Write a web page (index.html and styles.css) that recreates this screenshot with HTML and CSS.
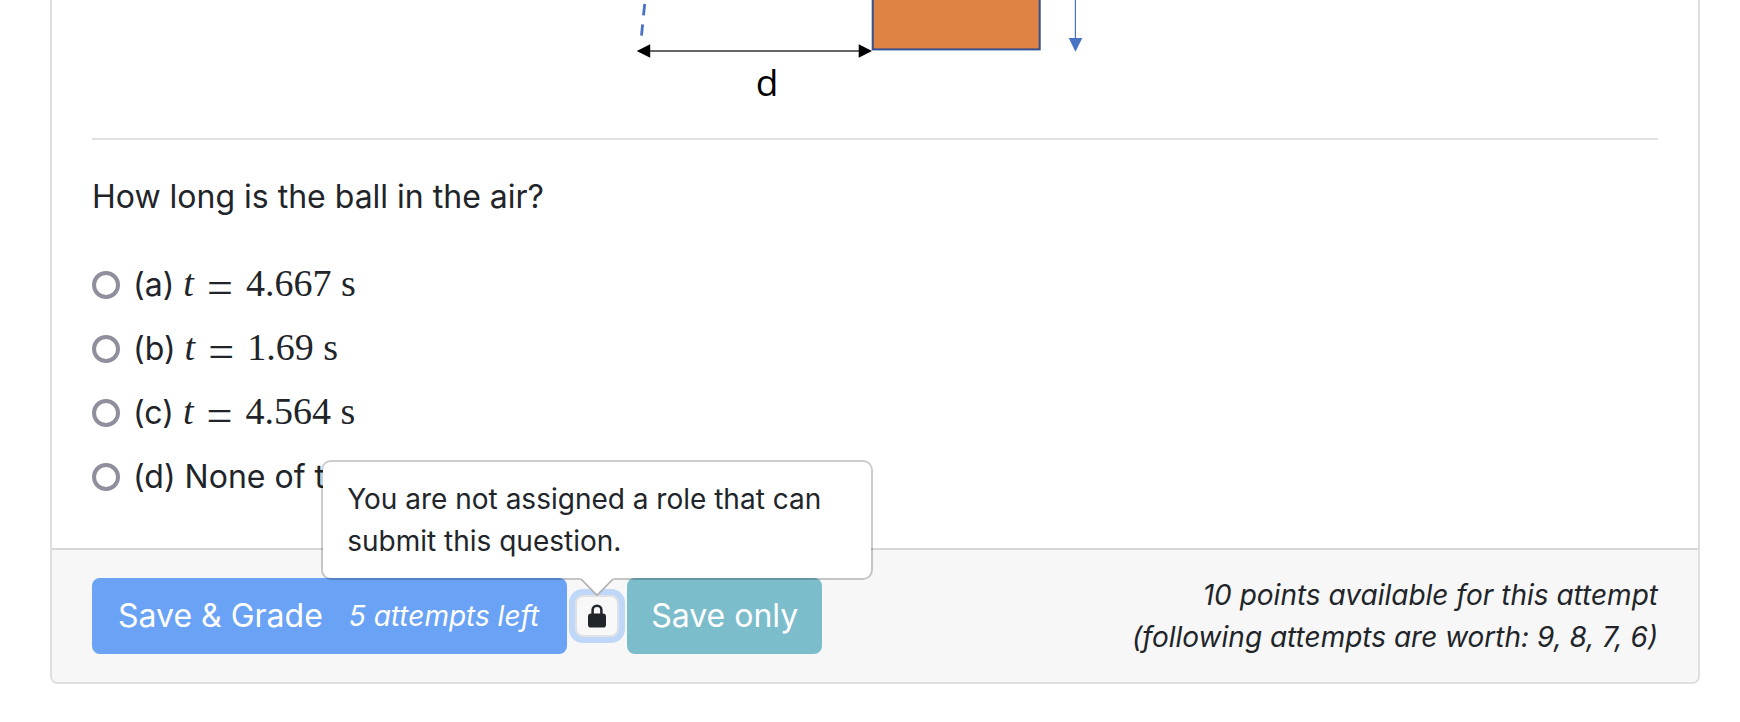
FILE: index.html
```html
<!DOCTYPE html>
<html lang="en">
<head>
<meta charset="utf-8">
<title>Question</title>
<link rel="stylesheet" href="styles.css">
</head>
<body>
<form class="card">
  <div class="card-body">
    <svg class="figure" width="480" height="106" viewBox="0 0 480 106" role="img" aria-label="Ball landing at distance d from a block">
      <path d="M9.7 4 8.5 15.3M7.6 24.3 6.5 35.7" fill="none" stroke="#4a72c4" stroke-width="2.8"/>
      <path d="M13 51H226" stroke="#333" stroke-width="1.5"/>
      <path d="M1.7 51 15.2 44.3V57.8ZM237 51 223.7 44.3V57.8Z" fill="#000"/>
      <rect x="237.7" y="-10" width="167" height="59.4" fill="#de8344" stroke="#34508f" stroke-width="2"/>
      <path d="M440.4 0V40" stroke="#4a72c4" stroke-width="1.2"/>
      <path d="M433.7 38H447.3L440.5 51.7Z" fill="#4a72c4"/>
      <text class="figure-label" x="132" y="96">d</text>
    </svg>
    <hr class="rule">
    <fieldset class="question">
      <legend class="prompt">How long is the ball in the air?</legend>
      <label class="option"><input type="radio" name="answer" value="a"><span>(a) <span class="math"><i>t</i><span class="eq">=</span>4.667 s</span></span></label>
      <label class="option"><input type="radio" name="answer" value="b"><span>(b) <span class="math"><i>t</i><span class="eq">=</span>1.69 s</span></span></label>
      <label class="option"><input type="radio" name="answer" value="c"><span>(c) <span class="math"><i>t</i><span class="eq">=</span>4.564 s</span></span></label>
      <label class="option"><input type="radio" name="answer" value="d"><span>(d) None of these</span></label>
    </fieldset>
  </div>
  <div class="card-footer">
    <div class="actions">
      <button type="button" class="btn btn-grade"><span>Save &amp; Grade</span><em class="attempts">5 attempts left</em></button>
      <div class="lock">
        <button type="button" class="lock-btn" aria-label="Submission locked" aria-describedby="lock-tip">
          <svg width="18" height="24" viewBox="0 0 18 24" aria-hidden="true">
            <path d="M4.6 11V6.1a4.4 4.4 0 0 1 8.8 0V11" fill="none" stroke="#212529" stroke-width="2.5"/>
            <rect x="0" y="9.6" width="18" height="14" rx="3.2" fill="#212529"/>
          </svg>
        </button>
        <div class="popover" id="lock-tip" role="tooltip">
          You are not assigned a role that can submit this question.
          <svg class="popover-arrow" width="34" height="18" viewBox="0 0 34 18" aria-hidden="true">
            <path d="M0 0H34L17 18Z" fill="#fff"/>
            <path d="M1 1 17 17.3 33 1" fill="none" stroke="#aaa" stroke-width="1.5"/>
          </svg>
        </div>
      </div>
      <button type="button" class="btn btn-save">Save only</button>
    </div>
    <p class="points">10 points available for this attempt<br>(following attempts are worth: 9, 8, 7, 6)</p>
  </div>
</form>
</body>
</html>
```
FILE: styles.css
```css
* {
  box-sizing: border-box;
}

body {
  margin: 0;
  padding: 0 40px 36px 50px;
  background: #fff;
  color: #212529;
  font: 32px/48px Inter, "Liberation Sans", sans-serif;
}

.card {
  border: 2px solid #dfdfdf;
  border-top: 0;
  border-radius: 0 0 8px 8px;
}

.card-body {
  padding: 0 40px 39px;
}

.figure {
  display: block;
  margin: 0 auto;
  overflow: visible;
}

.figure-label {
  font: 37px "Open Sans", "Noto Sans", sans-serif;
  text-anchor: middle;
}

.rule {
  height: 2px;
  margin: 32px 0 33px;
  border: 0;
  background: #e2e2e3;
}

.question {
  margin: 0;
  padding: 0;
  border: 0;
}

.prompt {
  margin-bottom: 32px;
  padding: 0;
}

.option {
  display: flex;
  align-items: center;
  gap: 13px;
  height: 64px;
}

.option input {
  appearance: none;
  width: 28px;
  height: 28px;
  margin: 0;
  border: 4px solid #8f8f9d;
  border-radius: 50%;
  background: #fff;
}

.math {
  font-family: "Liberation Serif", serif;
  font-size: 38px;
}

.eq {
  display: inline-block;
  width: 28px;
  margin: 0 12px;
  font-size: 46px;
  line-height: 1;
  text-align: center;
  vertical-align: middle;
}

.card-footer {
  display: flex;
  align-items: center;
  justify-content: space-between;
  padding: 24px 40px;
  border-top: 2px solid #d7d7d7;
  border-radius: 0 0 6px 6px;
  background: #f7f7f7;
}

.actions {
  display: flex;
  align-items: center;
  gap: 8px;
}

.btn {
  height: 76px;
  border: 0;
  border-radius: 8px;
  color: #fff;
  font: inherit;
  white-space: nowrap;
}

.btn-grade {
  display: flex;
  align-items: center;
  gap: 26px;
  padding: 0 28px 0 26px;
  background: #6aa3f6;
}

.btn-save {
  padding: 0 24px;
  background: #7cbdcc;
}

.attempts {
  font-size: 28px;
}

.lock {
  position: relative;
  display: flex;
}

.lock-btn {
  display: grid;
  place-items: center;
  width: 44px;
  height: 42px;
  padding: 0;
  border: 2px solid #dfe1e4;
  border-radius: 8px;
  background: #f8f8f8;
  box-shadow: 0 0 0 6px #bfd7f8;
}

.popover {
  position: absolute;
  bottom: calc(100% + 15px);
  left: 50%;
  width: 552px;
  padding: 16px 24px;
  transform: translateX(-50%);
  border: 2px solid rgba(0, 0, 0, 0.2);
  border-radius: 10px;
  background: #fff;
  background-clip: padding-box;
  font-size: 28px;
  line-height: 42px;
}

.popover-arrow {
  position: absolute;
  top: 100%;
  left: calc(50% - 17px);
}

.points {
  margin: 0;
  font-size: 28px;
  font-style: italic;
  line-height: 42px;
  text-align: right;
}
```
